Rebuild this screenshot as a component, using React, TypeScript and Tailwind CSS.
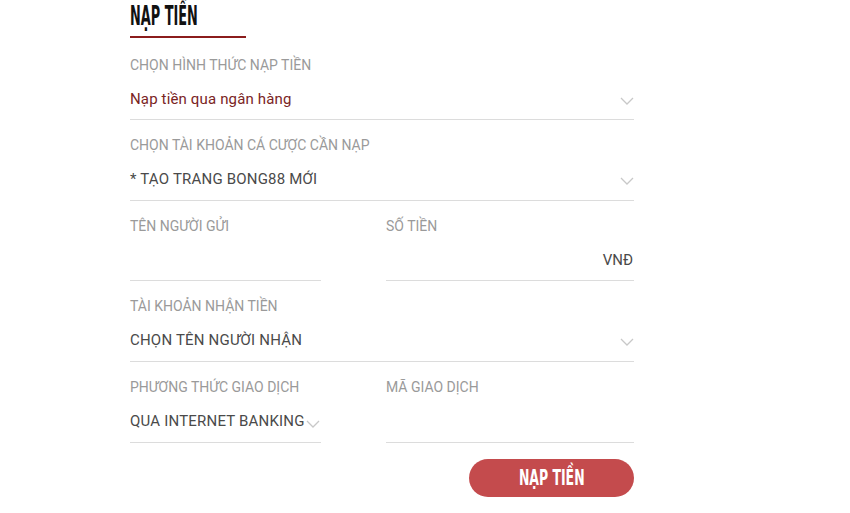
import React from "react";

const Chevron = ({ className = "" }: { className?: string }) => (
  <svg width="14" height="8" viewBox="0 0 14 8" className={className}>
    <path d="M1 1 L7 7 L13 1" fill="none" stroke="#c8c8c8" strokeWidth="1.3" />
  </svg>
);

const Label = ({ children }: { children: React.ReactNode }) => (
  <div className="h-[20px] text-[14px] leading-[20px] text-[#9a9a9a] uppercase">{children}</div>
);

const condensed = "'Liberation Sans Narrow', 'DejaVu Sans Condensed', sans-serif";

export default function App() {
  return (
    <div
      className="h-[513px] w-[850px] overflow-hidden bg-white"
      style={{ fontFamily: "Roboto, 'Noto Sans', sans-serif" }}
    >
      <div className="ml-[130px] w-[504px]">
        <div className="pt-[4px]">
          <div
            className="h-[25px] text-[26px] leading-[25px] font-bold text-[#111]"
            style={{ fontFamily: condensed, transform: "scaleX(0.55)", transformOrigin: "left" }}
          >
            NẠP TIỀN
          </div>
          <div className="mt-[7px] h-[2px] w-[116px] bg-[#8b1c1c]" />
        </div>

        <div className="mt-[12px] flex flex-col">
          {/* Row 1 */}
          <div className="pt-[5px] border-b border-[#dcdcdc]">
            <Label>CHỌN HÌNH THỨC NẠP TIỀN</Label>
            <div className="mt-[13px] flex h-[22px] items-center justify-between text-[15px] tracking-[0.15px] text-[#7a2424]">
              <span>Nạp tiền qua ngân hàng</span>
              <Chevron className="mt-[4px]" />
            </div>
            <div className="h-[9px]" />
          </div>

          {/* Row 2 */}
          <div className="pt-[15px] border-b border-[#dcdcdc]">
            <Label>CHỌN TÀI KHOẢN CÁ CƯỢC CẦN NẠP</Label>
            <div className="mt-[13px] flex h-[22px] items-center justify-between text-[15px] tracking-[0.2px] text-[#4a4a4a]">
              <span>* TẠO TRANG BONG88 MỚI</span>
              <Chevron className="mt-[4px]" />
            </div>
            <div className="h-[10px]" />
          </div>

          {/* Row 3 */}
          <div className="flex justify-between">
            <div className="w-[191px] pt-[15px] border-b border-[#dcdcdc]">
              <Label>TÊN NGƯỜI GỬI</Label>
              <div className="mt-[13px] h-[22px]" />
              <div className="h-[9px]" />
            </div>
            <div className="w-[248px] pt-[15px] border-b border-[#dcdcdc]">
              <Label>SỐ TIỀN</Label>
              <div className="mt-[13px] flex h-[22px] items-center justify-end text-[15px] text-[#4a4a4a]">
                <span className="mr-[1px]">VNĐ</span>
              </div>
              <div className="h-[9px]" />
            </div>
          </div>

          {/* Row 4 */}
          <div className="pt-[15px] border-b border-[#dcdcdc]">
            <Label>TÀI KHOẢN NHẬN TIỀN</Label>
            <div className="mt-[13px] flex h-[22px] items-center justify-between text-[15px] tracking-[0.2px] text-[#4a4a4a]">
              <span>CHỌN TÊN NGƯỜI NHẬN</span>
              <Chevron className="mt-[4px]" />
            </div>
            <div className="h-[10px]" />
          </div>

          {/* Row 5 */}
          <div className="flex justify-between">
            <div className="w-[191px] pt-[15px] border-b border-[#dcdcdc]">
              <Label>PHƯƠNG THỨC GIAO DỊCH</Label>
              <div className="mt-[13px] flex h-[22px] items-center text-[15px] tracking-[0.2px] text-[#4a4a4a]">
                <span>QUA INTERNET BANKING</span>
                <Chevron className="ml-[1px] mt-[6px]" />
              </div>
              <div className="h-[10px]" />
            </div>
            <div className="w-[248px] pt-[15px] border-b border-[#dcdcdc]">
              <Label>MÃ GIAO DỊCH</Label>
              <div className="mt-[13px] h-[22px]" />
              <div className="h-[10px]" />
            </div>
          </div>

          <div className="mt-[16px] flex justify-end">
            <button className="flex h-[38px] w-[165px] items-center justify-center rounded-full bg-[#c44b4d] text-white">
              <span
                className="text-[21px] font-bold leading-none"
                style={{ fontFamily: condensed, transform: "scaleX(0.66)" }}
              >
                NẠP TIỀN
              </span>
            </button>
          </div>
        </div>
      </div>
    </div>
  );
}
